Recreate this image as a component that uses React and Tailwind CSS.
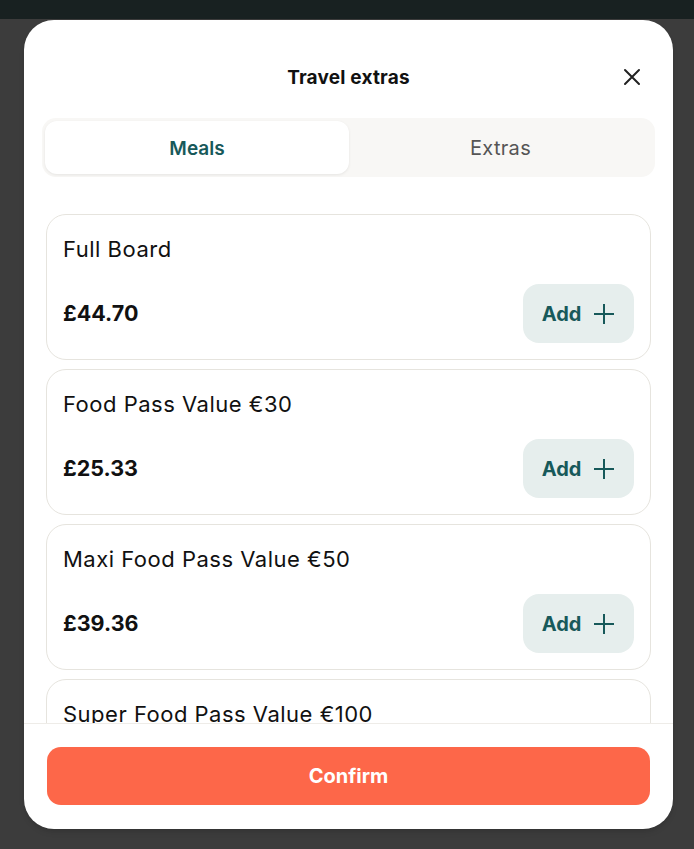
const meals = [
    { id: 1, name: 'Full Board', price: '£44.70' },
    { id: 2, name: 'Food Pass Value €30', price: '£25.33' },
    { id: 3, name: 'Maxi Food Pass Value €50', price: '£39.36' },
    { id: 4, name: 'Super Food Pass Value €100', price: '£74.10' },
];

const CloseIcon = () => (
    <svg width="18" height="18" viewBox="0 0 18 18" fill="none" stroke="currentColor" strokeWidth="2" strokeLinecap="round">
        <path d="M2 2L16 16M16 2L2 16" />
    </svg>
);

const PlusIcon = () => (
    <svg width="22" height="22" viewBox="0 0 22 22" fill="none" stroke="currentColor" strokeWidth="2">
        <path d="M11 1V21M1 11H21" />
    </svg>
);

export default function App() {
    return (
        <div className="h-[849px] w-full bg-[#3c3c3c] flex flex-col overflow-hidden" style={{ fontFamily: 'Inter, "Noto Sans", sans-serif' }}>
            <div className="h-[19px] bg-[#182121] shrink-0" />
            <div className="mt-[1px] ml-[24px] w-[649px] h-[809px] bg-white rounded-[30px] flex flex-col overflow-hidden shadow-md">
                {/* Header */}
                <div className="relative h-[98px] shrink-0 flex items-center justify-center pt-[18px]">
                    <h1 className="text-[19px] font-bold text-[#111] tracking-[0.2px]">Travel extras</h1>
                    <button className="absolute left-[599px] top-[48px] text-[#222]">
                        <CloseIcon />
                    </button>
                </div>

                {/* Tabs */}
                <div className="mx-[18px] h-[59px] shrink-0 rounded-[14px] bg-[#f8f7f5] p-[3px] flex">
                    <button className="w-[304px] pt-[3px] rounded-[12px] bg-white shadow-[0_1px_3px_rgba(0,0,0,0.08)] text-[19px] font-semibold text-[#17595a]">
                        Meals
                    </button>
                    <button className="flex-1 text-[20px] text-[#555] tracking-[0.3px]">Extras</button>
                </div>

                {/* List */}
                <div className="flex-1 overflow-hidden px-[22px] pt-[37px] flex flex-col gap-[9px]">
                    {meals.map(m => (
                        <div key={m.id} className="h-[146px] shrink-0 rounded-[20px] border border-[#e6e4de] px-[16px] pt-[20px] pb-[16px] flex flex-col">
                            <p className="text-[22px] text-[#111] leading-[28px] tracking-[0.5px]">{m.name}</p>
                            <div className="mt-auto flex items-center justify-between">
                                <span className="text-[21.5px] font-bold text-[#111]">{m.price}</span>
                                <button className="w-[111px] h-[59px] rounded-[16px] bg-[#e6eeed] text-[#17595a] text-[20px] font-bold flex items-center justify-center gap-[12px]">
                                    Add <PlusIcon />
                                </button>
                            </div>
                        </div>
                    ))}
                </div>

                {/* Footer */}
                <div className="h-[106px] shrink-0 border-t border-[#eeece8] px-[23px] pt-[23px]">
                    <button className="w-full h-[58px] rounded-[14px] bg-[#fd6749] text-white text-[20px] font-bold">
                        Confirm
                    </button>
                </div>
            </div>
        </div>
    );
}
